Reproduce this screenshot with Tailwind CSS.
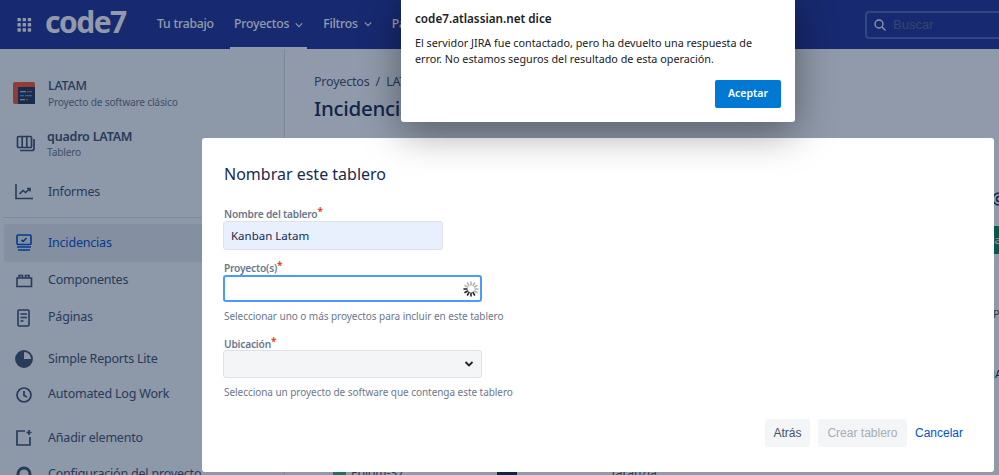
<!DOCTYPE html>
<html><head><meta charset="utf-8"><script src="https://cdn.jsdelivr.net/npm/@tailwindcss/browser@4"></script></head>
<body class="relative w-[999px] h-[475px] overflow-hidden bg-white font-['Noto_Sans','Open_Sans',sans-serif] text-[#42526e]">
<div class="flex flex-col h-[475px] overflow-hidden">
  <header class="h-[49px] shrink-0 bg-[#233295] text-white flex items-center text-[12.200px] tracking-[-0.2px] font-medium">
    <svg class="ml-[17px] w-[15px] h-[15px]" viewBox="0 0 16 16" fill="currentColor"><rect x="0.500" y="1" width="3.600" height="3.600" rx=".6"/><rect x="6" y="1" width="3.600" height="3.600" rx=".6"/><rect x="11.500" y="1" width="3.600" height="3.600" rx=".6"/><rect x="0.500" y="6.500" width="3.600" height="3.600" rx=".6"/><rect x="6" y="6.500" width="3.600" height="3.600" rx=".6"/><rect x="11.500" y="6.500" width="3.600" height="3.600" rx=".6"/><rect x="0.500" y="12" width="3.600" height="3.600" rx=".6"/><rect x="6" y="12" width="3.600" height="3.600" rx=".6"/><rect x="11.500" y="12" width="3.600" height="3.600" rx=".6"/></svg>
    <span class="ml-[13px] w-[112px] text-[30px] leading-none font-bold tracking-[-1.500px] -mt-[5px]">code7</span>
    <span class="w-[56px] whitespace-nowrap">Tu trabajo</span>
    <span class="relative ml-[21px] flex items-center h-[49px]">Proyectos<svg class="ml-[6px] w-[8px] h-[8px]" viewBox="0 0 10 10" fill="none" stroke="currentColor" stroke-width="1.400"><path d="M1 3l4 4 4-4"/></svg><span class="absolute -left-[4px] -right-[4px] bottom-0 h-[2px] bg-white"></span></span>
    <span class="ml-[20px] flex items-center">Filtros<svg class="ml-[6px] w-[8px] h-[8px]" viewBox="0 0 10 10" fill="none" stroke="currentColor" stroke-width="1.400"><path d="M1 3l4 4 4-4"/></svg></span>
    <span class="ml-[20px]">Paneles</span>
    <div class="ml-auto w-[134px] h-[28px] border-2 border-r-0 border-[#5566b8] rounded-l-[4px] flex items-center pl-[6px] text-[13px] font-normal font-['Liberation_Sans',sans-serif] tracking-normal text-[#5b6690]">
      <svg class="w-[14px] h-[14px] text-white" viewBox="0 0 14 14" fill="none" stroke="currentColor" stroke-width="1.300"><circle cx="6" cy="6" r="4"/><path d="M9 9l3.500 3.500"/></svg>
      <span class="ml-[6px]">Buscar</span>
    </div>
  </header>
  <div class="flex flex-1 min-h-0 overflow-hidden">
    <aside class="w-[285px] shrink-0 bg-[#fafbfc] border-r border-[#dfe1e6] pl-[4px] flex flex-col text-[12.500px] tracking-[-0.2px]">
      <div class="flex items-center h-[38px] mt-[25px] pl-[9px] shrink-0">
        <svg class="w-[22px] h-[22px] shrink-0" viewBox="0 0 22 22"><rect width="22" height="22" rx="2" fill="#ff5630"/><rect x="5" y="5" width="17" height="17" fill="#253858"/><rect x="7" y="9" width="6" height="1.300" fill="#c1c7d0"/><rect x="14" y="9" width="5" height="1.300" fill="#ff5630"/><rect x="7" y="13" width="4" height="1.300" fill="#4c9aff"/><rect x="12" y="13" width="7" height="1.300" fill="#4c9aff"/><rect x="7" y="17" width="5" height="1.300" fill="#c1c7d0"/><rect x="13" y="17" width="2" height="1.300" fill="#ff5630"/></svg>
        <div class="ml-[13px]"><div class="leading-[17px] font-medium">LATAM</div><div class="text-[10.200px] leading-[16px] text-[#6b778c]">Proyecto de software clásico</div></div>
      </div>
      <div class="flex items-center h-[36px] mt-[14px] pl-[12px] shrink-0">
        <svg class="w-[20px] h-[20px] shrink-0 text-[#42526e]" viewBox="0 0 20 20" fill="none" stroke="currentColor" stroke-width="1.700"><rect x="1.500" y="2.500" width="14" height="11" rx="1"/><path d="M6.200 2.500v11M10.800 2.500v11M18 5v9.500a2 2 0 0 1-2 2H4"/></svg>
        <div class="ml-[11px]"><div class="leading-[17px] font-semibold">quadro LATAM</div><div class="text-[10.200px] leading-[15px] text-[#6b778c]">Tablero</div></div>
      </div>
      <div class="flex items-center h-[36px] mt-[12px] pl-[10px] shrink-0">
        <svg class="w-[20px] h-[20px] shrink-0" viewBox="0 0 20 20" fill="none" stroke="currentColor" stroke-width="1.600"><path d="M2 2v14.500h17M5.500 12l3.500-3.500 2.500 2 4.500-4M13 6.500h3v3"/></svg>
        <span class="ml-[14px]">Informes</span>
      </div>
      <div class="h-px bg-[#dfe1e6] mt-[7px] -ml-px shrink-0"></div>
      <div class="flex items-center h-[38px] mt-[6px] pl-[10px] bg-[#ebecf0] text-[#0052cc] rounded-l-[3px] shrink-0">
        <svg class="w-[20px] h-[20px] shrink-0" viewBox="0 0 20 20" fill="none" stroke="currentColor" stroke-width="1.600"><rect x="3" y="2" width="14" height="9.500" rx="1"/><path d="M7.500 6.800l1.800 1.600L12.500 5M3 14h14M4 17h12"/></svg>
        <span class="ml-[14px]">Incidencias</span>
      </div>
      <div class="flex items-center h-[37px] pl-[10px] shrink-0">
        <svg class="w-[20px] h-[20px] shrink-0" viewBox="0 0 20 20" fill="none" stroke="currentColor" stroke-width="1.600"><path d="M3 7h14.500v8.500H3zM5 7V4.500h3.500V7M11.500 7V4.500H15V7"/></svg>
        <span class="ml-[14px]">Componentes</span>
      </div>
      <div class="flex items-center h-[37px] pl-[10px] shrink-0">
        <svg class="w-[20px] h-[20px] shrink-0" viewBox="0 0 20 20" fill="none" stroke="currentColor" stroke-width="1.600"><rect x="4" y="2" width="11" height="16" rx="1"/><path d="M6.500 6h6.500M6.500 9.500h6.500M6.500 13h3"/></svg>
        <span class="ml-[14px]">Páginas</span>
      </div>
      <div class="flex items-center h-[36px] mt-[5px] pl-[10px] shrink-0">
        <svg class="w-[20px] h-[20px] shrink-0" viewBox="0 0 20 20"><circle cx="10" cy="10" r="8" fill="none" stroke="currentColor" stroke-width="1.800"/><path d="M2 10a8 8 0 0 1 8-8v8h8a8 8 0 0 1-16 0z" fill="currentColor"/></svg>
        <span class="ml-[14px]">Simple Reports Lite</span>
      </div>
      <div class="flex items-center h-[35px] pl-[10px] shrink-0">
        <svg class="w-[20px] h-[20px] shrink-0" viewBox="0 0 20 20" fill="none" stroke="currentColor" stroke-width="1.700"><circle cx="10" cy="10" r="7"/><path d="M10 6v4.500l3 1.500"/></svg>
        <span class="ml-[14px]">Automated Log Work</span>
      </div>
      <div class="flex items-center h-[36px] mt-[8px] pl-[10px] shrink-0">
        <svg class="w-[20px] h-[20px] shrink-0" viewBox="0 0 20 20" fill="none" stroke="currentColor" stroke-width="1.700"><path d="M11 3H3v14h13v-8M15 2v5M12.500 4.500h5"/></svg>
        <span class="ml-[14px]">Añadir elemento</span>
      </div>
      <div class="flex items-center h-[36px] pl-[10px] shrink-0">
        <svg class="w-[20px] h-[20px] shrink-0" viewBox="0 0 20 20" fill="none" stroke="currentColor" stroke-width="3"><circle cx="10" cy="10" r="6"/></svg>
        <span class="ml-[14px] whitespace-nowrap">Configuración del proyecto</span>
      </div>
    </aside>
    <main class="relative flex-1 pl-[29px] pt-[24px]">
      <div class="text-[12.500px] leading-[17px] tracking-[-0.2px]">Proyectos &nbsp;/&nbsp; LATAM</div>
      <h1 class="text-[20.500px] tracking-[-0.3px] leading-[30px] mt-[3px] font-medium text-[#172b4d]">Incidencias</h1>
      <svg class="absolute left-[707px] top-[142px] w-[14px] h-[16px]" viewBox="0 0 14 16" fill="none" stroke="#172b4d" stroke-width="1.500"><circle cx="7" cy="8" r="2.500"/><circle cx="7" cy="8" r="6"/></svg>
      <div class="absolute left-[707px] top-[177px] w-[14px] h-[28px] bg-[#00875a] text-white text-[11px] leading-[28px]">la</div>
      <div class="absolute left-[708px] top-[257px] text-[11px]">P</div>
      <div class="absolute left-[707px] top-[317px] text-[11px] text-[#172b4d]">JA</div>
      <div class="absolute left-[48px] top-[419px] w-[13px] h-[13px] bg-[#36b37e]"></div>
      <div class="absolute left-[66px] top-[415px] text-[12px]">Eolom-37</div>
      <div class="absolute left-[212px] top-[421px] w-[20px] h-[10px] bg-[#172b4d]"></div>
      <div class="absolute left-[325px] top-[415px] text-[12px]">Taranzia</div>
    </main>
  </div>
</div>
<div class="absolute inset-0 bg-[#091e42]/45"></div>
<div class="absolute left-[202px] top-[138px] w-[792px] h-[334px] bg-white rounded-[3px] pl-[21px] pr-[22px] pt-[24px]">
  <h2 class="ml-px text-[16px] leading-[24px] text-[#172b4d]">Nombrar este tablero</h2>
  <div class="ml-px mt-[21px] text-[10.200px] tracking-[-0.2px] leading-[14px] font-semibold text-[#6b778c] flex">Nombre del tablero<span class="text-[#de350b] text-[10px] leading-[10px] -mt-[1px]">*</span></div>
  <div class="w-[220px] h-[29px] bg-[#e8f0fe] border border-[#dfe1e6] rounded-[3px] flex items-center pl-[7px] text-[11.500px] text-[#172b4d]">Kanban Latam</div>
  <div class="ml-px mt-[11px] text-[10.200px] tracking-[-0.2px] leading-[14px] font-semibold text-[#6b778c] flex">Proyecto(s)<span class="text-[#de350b] text-[10px] leading-[10px] -mt-[1px]">*</span></div>
  <div class="w-[259px] h-[27px] border-2 border-[#4c9aff] rounded-[3px] flex items-center justify-end pr-[1px]">
    <svg class="w-[16px] h-[16px]" viewBox="0 0 16 16" stroke-width="1.600" stroke-linecap="round"><g stroke="#b5b5b5"><path d="M8 1v3M11.500 2l-1.500 2.600M14 4.500l-2.600 1.500M15 8h-3M14 11.500l-2.600-1.500"/><path d="M2 4.500L4.600 6M4.500 2L6 4.600"/></g><g stroke="#222"><path d="M1 8h3M2 11.500L4.600 10M4.500 14L6 11.400M8 15v-3M11.500 14L10 11.400"/></g></svg>
  </div>
  <div class="ml-px mt-[7px] text-[10px] tracking-[-0.05px] leading-[14px] text-[#6b778c]">Seleccionar uno o más proyectos para incluir en este tablero</div>
  <div class="ml-px mt-[14px] text-[10.200px] tracking-[-0.2px] leading-[14px] font-semibold text-[#6b778c] flex">Ubicación<span class="text-[#de350b] text-[10px] leading-[10px] -mt-[1px]">*</span></div>
  <div class="-mt-px w-[259px] h-[28px] bg-[#f4f5f7] border border-[#dfe1e6] rounded-[3px] flex items-center justify-end pr-[7px]">
    <svg class="w-[10px] h-[10px]" viewBox="0 0 10 10" fill="none" stroke="#222" stroke-width="1.800"><path d="M1.500 3l3.500 3.500L8.500 3"/></svg>
  </div>
  <div class="ml-px mt-[7px] text-[10px] tracking-[-0.05px] leading-[14px] text-[#6b778c]">Selecciona un proyecto de software que contenga este tablero</div>
  <div class="absolute right-[31px] top-[281px] flex items-center font-['Liberation_Sans',sans-serif] text-[12px]">
    <span class="h-[28px] w-[45px] justify-center flex items-center bg-[#f4f5f7] rounded-[3px] text-[#42526e]">Atrás</span>
    <span class="ml-[8px] h-[28px] w-[89px] justify-center flex items-center bg-[#f4f5f7] rounded-[3px] text-[#a5adba]">Crear tablero</span>
    <span class="ml-[8px] text-[#0052cc]">Cancelar</span>
  </div>
</div>
<div class="absolute left-[401px] -top-[4px] w-[394px] h-[126px] bg-white rounded-[3px] shadow-[0_10px_40px_rgba(0,0,0,0.4)] px-[14px] pt-[14px] font-['Noto_Sans',sans-serif] text-[#202124]">
  <div class="text-[11.700px] leading-[16px] font-semibold">code7.atlassian.net dice</div>
  <p class="mt-[9px] text-[10.800px] leading-[15.500px] w-[360px]">El servidor JIRA fue contactado, pero ha devuelto una respuesta de error. No estamos seguros del resultado de esta operación.</p>
  <div class="absolute right-[14px] top-[84px] w-[66px] h-[28px] bg-[#0078d4] rounded-[2px] flex items-center justify-center text-white text-[10.500px] font-semibold">Aceptar</div>
</div>
</body></html>
